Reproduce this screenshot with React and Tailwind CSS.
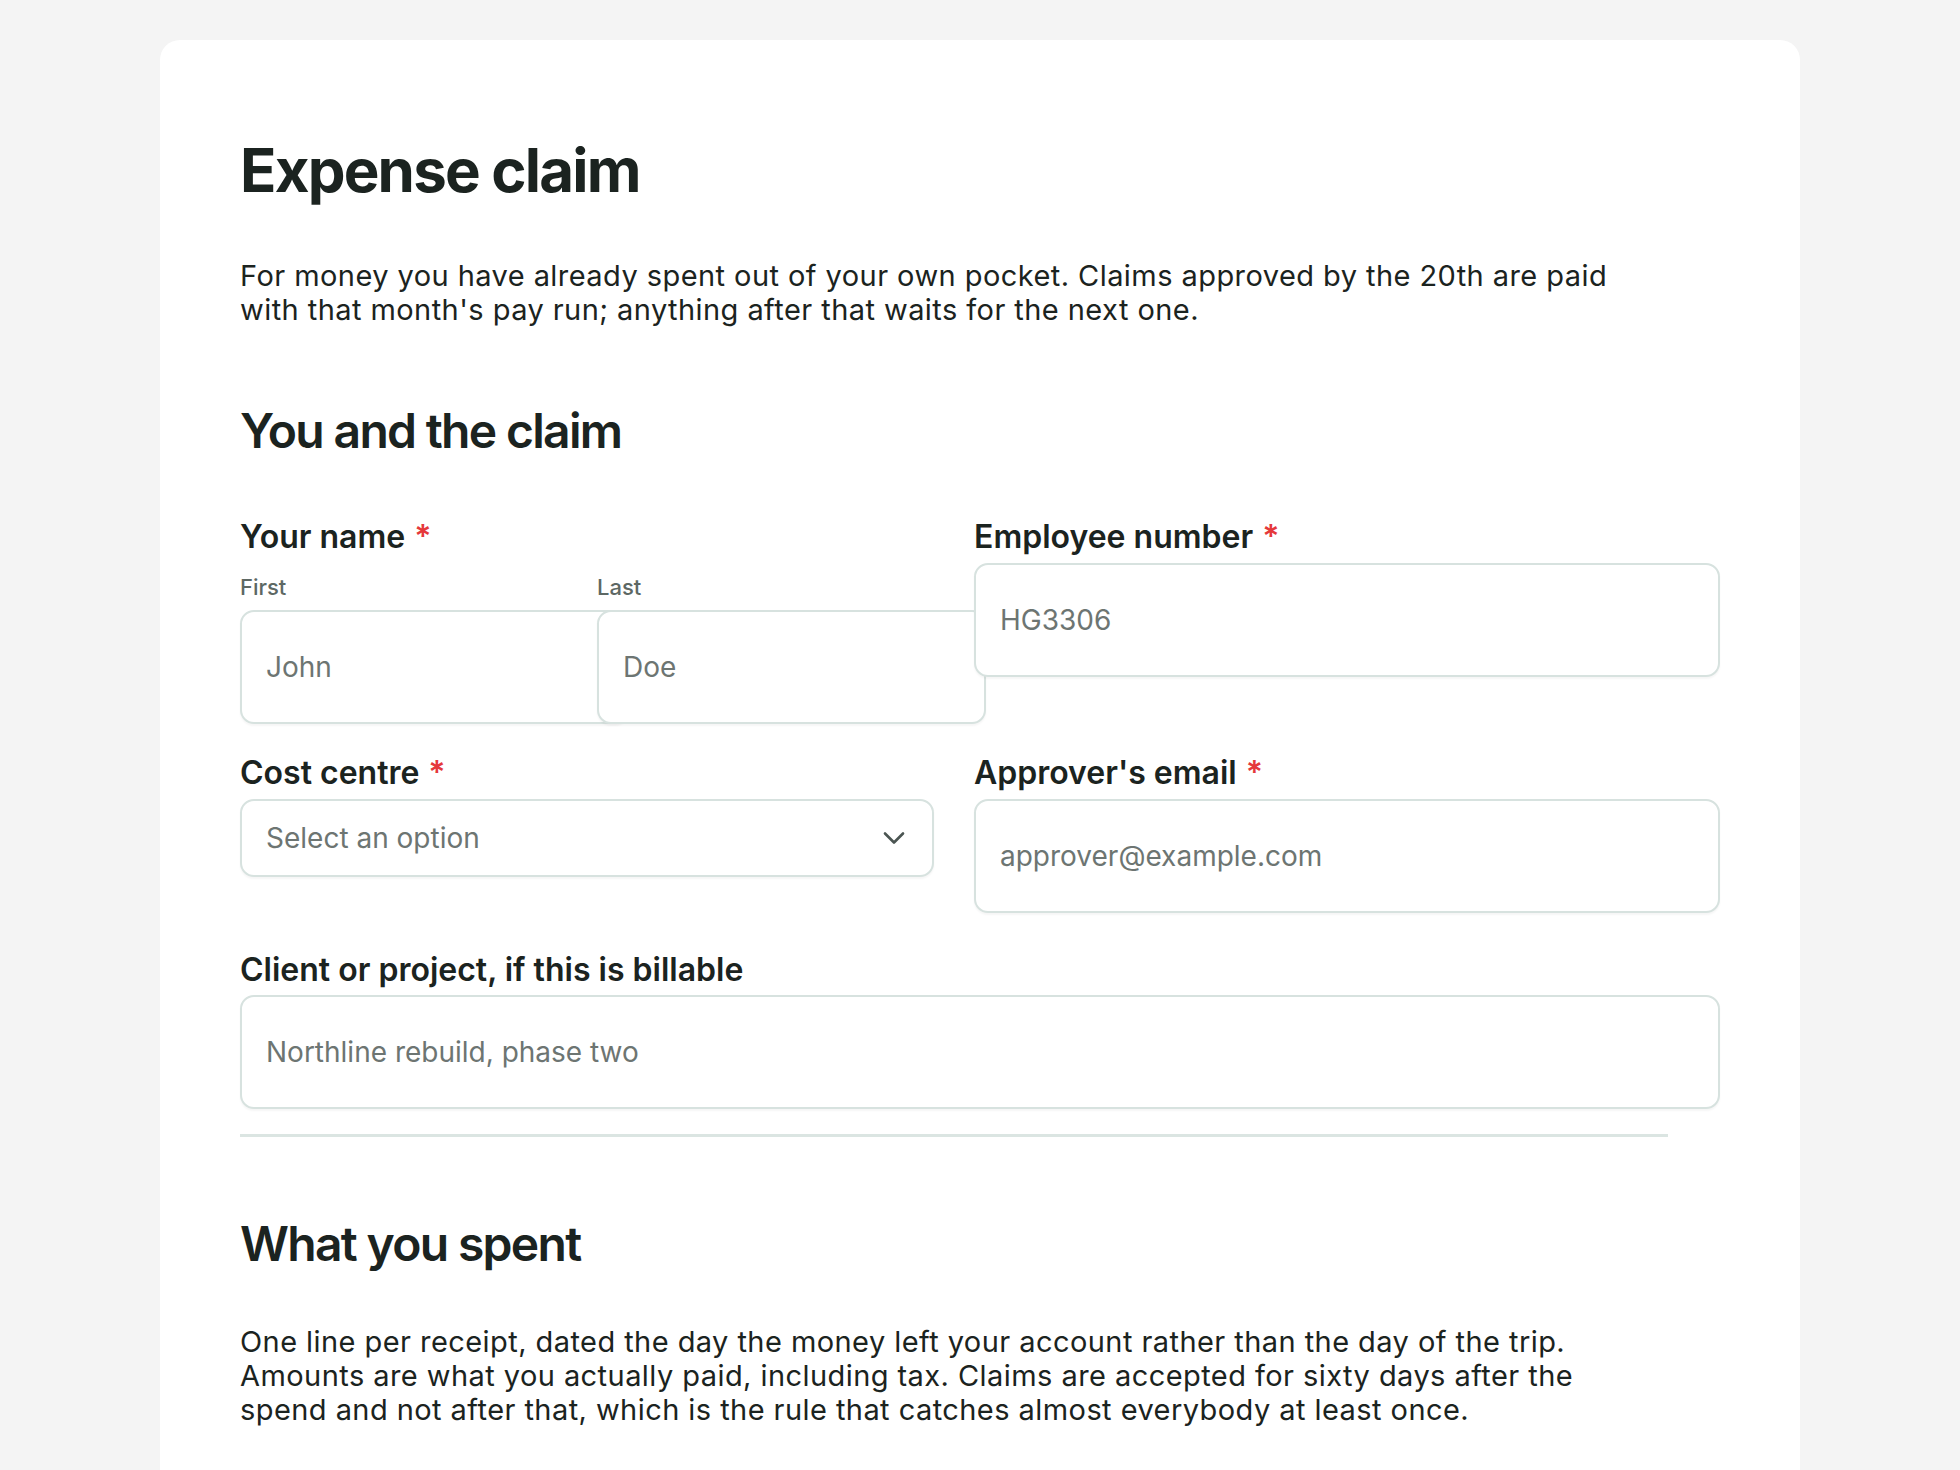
import React from 'react'
import { ChevronDown } from 'lucide-react'

const font = { fontFamily: 'Inter, "Noto Sans", sans-serif' }

const Required = () => <span className="ml-[9px] text-[#e5383b]">*</span>

const Label = ({ children, required }) => (
  <div className="text-[32px] leading-[36px] font-semibold text-[#1b2320]">
    {children}
    {required && <Required />}
  </div>
)

const TextInput = ({ placeholder }) => (
  <input
    type="text"
    placeholder={placeholder}
    className="box-content block w-full h-[30px] py-[40px] px-[24px] border-2 border-[#d7e2df] rounded-[14px] bg-white text-[28px] text-[#1b2320] placeholder:text-[#6d7572] shadow-[0_2px_2px_rgba(0,0,0,0.04)] outline-none"
  />
)

export default function App() {
  return (
    <div className="h-[1470px] overflow-hidden bg-[#f4f4f4] pt-[40px] px-[160px]" style={font}>
      <div className="h-[1430px] overflow-hidden bg-white rounded-t-[20px] pt-[100px] px-[80px]">
        <div className="w-[1428px]">
          {/* Header */}
          <h1 className="text-[60px] leading-[60px] font-bold tracking-[-0.03em] text-[#1b2320]">Expense claim</h1>
          <p className="mt-[59px] max-w-[1390px] text-[29px] leading-[34px] tracking-[0.015em] text-[#1b2320]">
            For money you have already spent out of your own pocket. Claims approved by the 20th are paid
            with that month's pay run; anything after that waits for the next one.
          </p>

          {/* You and the claim */}
          <h2 className="mt-[80px] text-[48px] leading-[48px] font-semibold tracking-[-0.035em] text-[#1b2320]">You and the claim</h2>

          <div className="mt-[64px] grid grid-cols-2 gap-x-[40px]">
            <div>
              <Label required>Your name</Label>
              <div className="mt-[18px] grid grid-cols-2 gap-x-[20px]">
                <div>
                  <div className="text-[22px] leading-[28px] font-medium text-[#5d6864]">First</div>
                  <div className="mt-[9px]">
                    <TextInput placeholder="John" />
                  </div>
                </div>
                <div>
                  <div className="text-[22px] leading-[28px] font-medium text-[#5d6864]">Last</div>
                  <div className="mt-[9px]">
                    <TextInput placeholder="Doe" />
                  </div>
                </div>
              </div>
            </div>
            <div>
              <Label required>Employee number</Label>
              <div className="mt-[8px]">
                <TextInput placeholder="HG3306" />
              </div>
            </div>
          </div>

          <div className="mt-[31px] grid grid-cols-2 gap-x-[40px]">
            <div>
              <Label required>Cost centre</Label>
              <div className="mt-[8px]">
                <div className="flex items-center justify-between h-[78px] pl-[24px] pr-[20px] border-2 border-[#d7e2df] rounded-[14px] bg-white shadow-[0_2px_2px_rgba(0,0,0,0.04)]">
                  <span className="text-[28px] text-[#6d7572]">Select an option</span>
                  <ChevronDown className="w-[36px] h-[36px] text-[#4b5552]" strokeWidth={1.75} />
                </div>
              </div>
            </div>
            <div>
              <Label required>Approver's email</Label>
              <div className="mt-[8px]">
                <TextInput placeholder="approver@example.com" />
              </div>
            </div>
          </div>

          <div className="mt-[39px]">
            <Label>Client or project, if this is billable</Label>
            <div className="mt-[7px]">
              <TextInput placeholder="Northline rebuild, phase two" />
            </div>
          </div>

          <div className="mt-[25px] h-[3px] bg-[#dbe5e2]" />

          {/* What you spent */}
          <h2 className="mt-[83px] text-[48px] leading-[48px] font-semibold tracking-[-0.035em] text-[#1b2320]">What you spent</h2>
          <p className="mt-[57px] max-w-[1390px] text-[29px] leading-[34px] tracking-[0.015em] text-[#1b2320]">
            One line per receipt, dated the day the money left your account rather than the day of the trip.
            Amounts are what you actually paid, including tax. Claims are accepted for sixty days after the
            spend and not after that, which is the rule that catches almost everybody at least once.
          </p>
        </div>
      </div>
    </div>
  )
}
